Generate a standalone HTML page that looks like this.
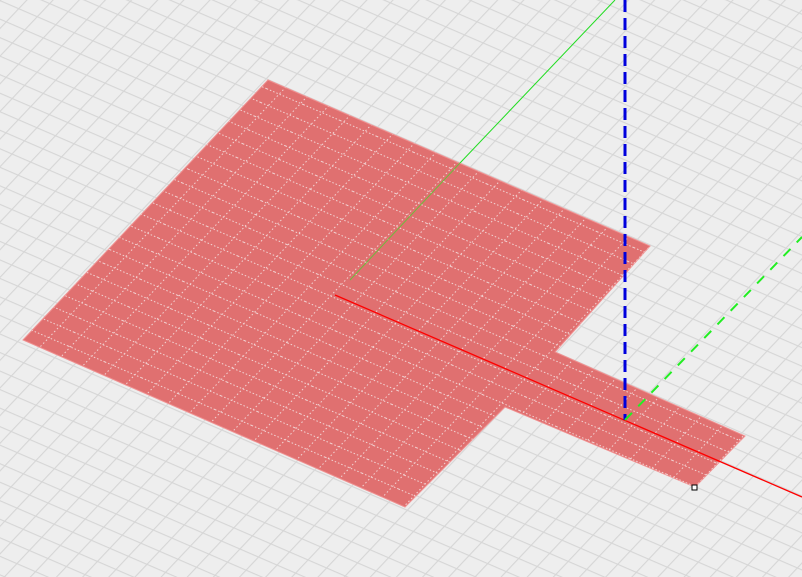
<!DOCTYPE html>
<html><head><meta charset="utf-8"><style>
html,body{margin:0;padding:0;background:#eeeeee;overflow:hidden}
svg{display:block}
</style></head><body>
<svg width="802" height="577" viewBox="0 0 802 577" xmlns="http://www.w3.org/2000/svg">
<defs>
<pattern id="g1" patternUnits="userSpaceOnUse" width="40" height="17" patternTransform="rotate(23.4)">
<line x1="0" y1="0.5" x2="40" y2="0.5" stroke="#d6d6d6" stroke-width="1.2"/>
</pattern>
<pattern id="g2" patternUnits="userSpaceOnUse" width="40" height="19" patternTransform="rotate(-46.6)">
<line x1="0" y1="0.5" x2="40" y2="0.5" stroke="#d6d6d6" stroke-width="1.2"/>
</pattern>
<pattern id="m1" patternUnits="userSpaceOnUse" width="40" height="15" patternTransform="rotate(23.4) translate(0,5)">
<line x1="0" y1="0.5" x2="40" y2="0.5" stroke="#f2d4d4" stroke-width="1" stroke-dasharray="1.5,2"/>
</pattern>
<pattern id="m2" patternUnits="userSpaceOnUse" width="40" height="22" patternTransform="rotate(-46.6) translate(0,3)">
<line x1="0" y1="0.5" x2="40" y2="0.5" stroke="#f2d4d4" stroke-width="1" stroke-dasharray="1.5,2.5"/>
</pattern>
<clipPath id="pc"><path d="M268,80 L650,246 L555,352 L745,436 L695,487 L505,407 L405,507 L23,340 Z"/></clipPath>
</defs>
<rect width="802" height="577" fill="#eeeeee"/>
<rect width="802" height="577" fill="url(#g1)"/>
<rect width="802" height="577" fill="url(#g2)"/>
<line x1="460" y1="163" x2="615" y2="0" stroke="#22dd22" stroke-width="1"/>
<path d="M268,80 L650,246 L555,352 L745,436 L695,487 L505,407 L405,507 L23,340 Z" fill="#e07070" stroke="#f09090" stroke-width="1"/>
<g clip-path="url(#pc)">
<rect width="802" height="577" fill="url(#m1)"/>
<rect width="802" height="577" fill="url(#m2)"/>
</g>
<line x1="350" y1="280" x2="460" y2="163" stroke="#55cc33" stroke-width="1" opacity="0.8"/>
<line x1="335" y1="295" x2="802" y2="497" stroke="#ff0000" stroke-width="1.3"/>
<line x1="625" y1="0" x2="625" y2="420" stroke="#0000dd" stroke-width="3" stroke-dasharray="12,6"/>
<line x1="625" y1="420" x2="802" y2="237" stroke="#22ee22" stroke-width="2" stroke-dasharray="10,9"/>
<rect x="692" y="485" width="5" height="5" fill="#fff" stroke="#000" stroke-width="1"/>
</svg>
</body></html>
